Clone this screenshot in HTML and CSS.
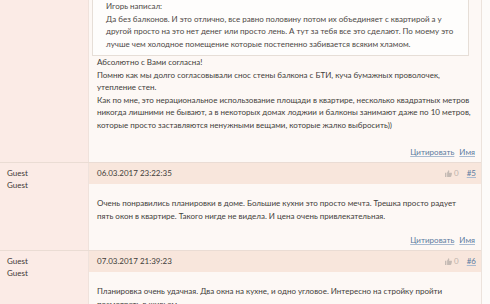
FILE: index.html
```html
<!DOCTYPE html>
<html lang="ru">
<head>
<meta charset="utf-8">
<link rel="stylesheet" href="styles.css">
</head>
<body>
<div class="thread">
  <div class="post first">
    <div class="author"></div>
    <div class="main">
      <div class="text">
        <div class="quote">
          <div>Игорь написал:</div>
          <div>Да без балконов. И это отлично, все равно половину потом их объединяет с квартирой а у другой просто на это нет денег или просто лень. А тут за тебя все это сделают. По моему это лучше чем холодное помещение которые постепенно забивается всяким хламом.</div>
        </div>
        <div>Абсолютно с Вами согласна!</div>
        <div>Помню как мы долго согласовывали снос стены балкона с БТИ, куча бумажных проволочек, утепление стен.</div>
        <div>Как по мне, это нерациональное использование площади в квартире, несколько квадратных метров никогда лишними не бывают, а в некоторых домах лоджии и балконы занимают даже по 10 метров, которые просто заставляются ненужными вещами, которые жалко выбросить))</div>
      </div>
      <div class="foot"><a href="#">Цитировать</a><a href="#">Имя</a></div>
    </div>
  </div>

  <div class="post">
    <div class="author"><div>Guest</div><div>Guest</div></div>
    <div class="main">
      <div class="head">
        <span>06.03.2017 23:22:35</span>
        <span class="meta"><span class="like"><svg width="7" height="7" viewBox="0 0 10 10"><path d="M0 4h2v6H0z M3 4 L5 0.5 C6 0.5 6.3 1.3 6 2.5 L5.6 4 H9 C9.8 4 10 4.6 9.9 5.2 L9 9 C8.8 9.7 8.4 10 7.8 10 H3z" fill="#c4bab4"/></svg>0</span><a href="#">#5</a></span>
      </div>
      <div class="text">
        <div>Очень понравились планировки в доме. Большие кухни это просто мечта. Трешка просто радует пять окон в квартире. Такого нигде не видела. И цена очень привлекательная.</div>
      </div>
      <div class="foot"><a href="#">Цитировать</a><a href="#">Имя</a></div>
    </div>
  </div>

  <div class="post">
    <div class="author"><div>Guest</div><div>Guest</div></div>
    <div class="main">
      <div class="head">
        <span>07.03.2017 21:39:23</span>
        <span class="meta"><span class="like"><svg width="7" height="7" viewBox="0 0 10 10"><path d="M0 4h2v6H0z M3 4 L5 0.5 C6 0.5 6.3 1.3 6 2.5 L5.6 4 H9 C9.8 4 10 4.6 9.9 5.2 L9 9 C8.8 9.7 8.4 10 7.8 10 H3z" fill="#c4bab4"/></svg>0</span><a href="#">#6</a></span>
      </div>
      <div class="text">
        <div>Планировка очень удачная. Два окна на кухне, и одно угловое. Интересно на стройку пройти посмотреть в живьем.</div>
      </div>
      <div class="foot"><a href="#">Цитировать</a><a href="#">Имя</a></div>
    </div>
  </div>
</div>
</body>
</html>
```
FILE: styles.css
```css
html, body {
  margin: 0;
  padding: 0;
  background: #fdfbf9;
  overflow: hidden;
}
body {
  font-family: Lato, "Open Sans", sans-serif;
  font-size: 8px;
  line-height: 12.5px;
  color: #423d3a;
}
.thread {
  width: 481px;
  border-right: 1px solid #ece3dc;
  margin-top: -13px;
}
.post {
  display: grid;
  grid-template-columns: 89px 1fr;
  border-top: 1px solid #eadcd4;
}
.post.first {
  border-top: none;
}
.author {
  background: #fbebe6;
  border-right: 1px solid #efe2dc;
  padding: 4px 7px;
  line-height: 12px;
  color: #3d3836;
}
.main {
  background: #fdf8f5;
}
.head {
  height: 21px;
  background: #f8e6dc;
  display: flex;
  justify-content: space-between;
  align-items: center;
  padding: 0 5px 0 8px;
}
.meta {
  display: flex;
  align-items: center;
  gap: 8px;
  color: #bdb3ad;
}
.like {
  display: flex;
  align-items: center;
  gap: 2px;
}
a {
  color: #5a7aa0;
  text-decoration: underline;
  text-decoration-color: #a9bad0;
}
.text {
  padding: 13px 8px 12px 8px;
}
.first .text {
  padding-top: 0;
  padding-bottom: 15px;
}
.quote {
  margin: 0 4px 0 -5px;
  padding: 13px 5px 5px 13px;
  background: #fefdfc;
  border: 1px solid #e6ded7;
  border-top: none;
  color: #4d4845;
}
.foot {
  display: flex;
  justify-content: flex-end;
  gap: 5px;
  padding: 0 6px 0 0;
  height: 16px;
}
```
